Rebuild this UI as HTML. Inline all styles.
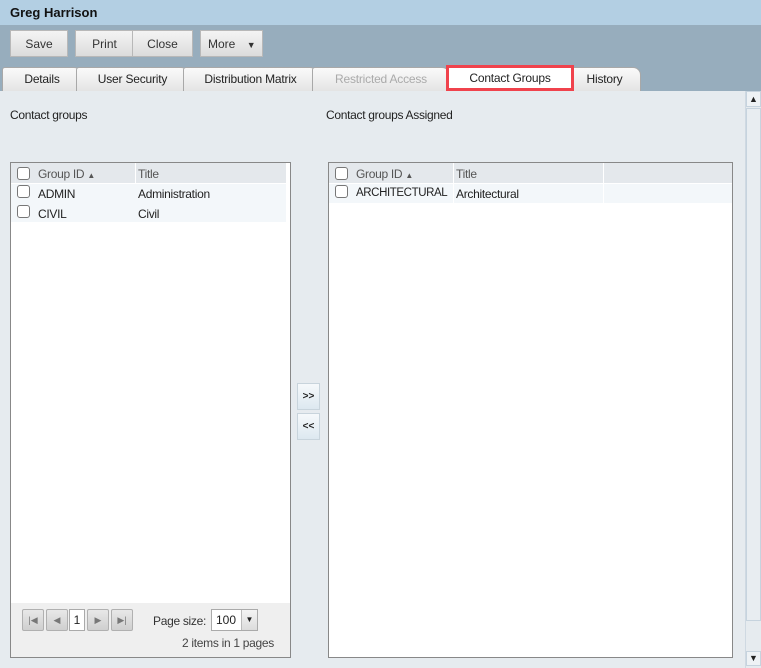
<!DOCTYPE html>
<html><head><meta charset="utf-8"><style>
*{box-sizing:border-box;margin:0;padding:0}
body{width:761px;height:668px;overflow:hidden;background:#e6ebef;font-family:"Liberation Sans",Arial,sans-serif;font-size:12px;color:#222;position:relative}
.a{position:absolute}
.title{left:0;top:0;width:761px;height:25px;background:#b3cfe3;font-weight:bold;font-size:13px;padding:5px 0 0 10px;color:#111}
.tool{left:0;top:25px;width:761px;height:66px;background:#97adbd}
.btn{position:absolute;top:30px;height:27px;background:linear-gradient(#f4f4f4,#dcdcdc);border:1px solid #b8b8b8;text-align:center;line-height:27px;color:#333}
.tab{position:absolute;top:67px;height:24px;background:linear-gradient(#fafafa,#e4e4e4);border:1px solid #a8a8a8;border-bottom:none;border-radius:3px 8px 0 0;text-align:center;line-height:22px;color:#222;letter-spacing:-0.2px}
.grid{position:absolute;top:162px;height:496px;background:#fff;border:1px solid #888}
.hdr{position:absolute;left:0;top:0;height:20px;background:#e4e8ec;width:100%}
.cb{position:absolute;width:13px;height:13px;border:1px solid #777;border-radius:3px;background:#fff}
.row{position:absolute;left:0;height:19px;width:100%;background:#f3f7fa}
.t{position:absolute;white-space:nowrap;letter-spacing:-0.3px}
.pb{position:absolute;top:609px;width:22px;height:22px;background:linear-gradient(#e8e8e8,#cfcfcf);border:1px solid #b0b0b0;border-radius:2px;color:#777;font-size:9px;text-align:center;line-height:20px}
</style></head><body>
<div class="a title">Greg Harrison</div>
<div class="a tool"></div>
<div class="btn" style="left:10px;width:58px">Save</div>
<div class="btn" style="left:75px;width:58px;border-right:none">Print</div>
<div class="btn" style="left:132px;width:61px">Close</div>
<div class="btn" style="left:200px;width:63px;text-align:left;padding-left:7px">More <span style="font-size:9px;margin-left:8px">▼</span></div>

<div class="tab" style="left:2px;width:80px">Details</div>
<div class="tab" style="left:76px;width:113px">User Security</div>
<div class="tab" style="left:183px;width:135px">Distribution Matrix</div>
<div class="tab" style="left:312px;width:138px;color:#aaa">Restricted Access</div>
<div class="tab" style="left:568px;width:73px">History</div>
<div class="tab" style="left:446px;width:128px;background:#fff;border:3px solid #f0424c;border-radius:0;line-height:21px;top:65px;height:26px">Contact Groups</div>

<div class="t" style="left:10px;top:108px">Contact groups</div>
<div class="t" style="left:326px;top:108px">Contact groups Assigned</div>

<div class="grid" style="left:10px;width:281px">
 <div class="hdr" style="width:275px"></div>
 <div class="a" style="left:124px;top:0;width:1px;height:20px;background:#fff"></div>
 <div class="cb" style="left:6px;top:4px"></div><div class="t" style="left:27px;top:4px;color:#555">Group ID <span style="font-size:8px">▲</span></div>
 <div class="t" style="left:127px;top:4px;color:#555">Title</div>
 <div class="row" style="top:21px;width:275px"></div>
 <div class="cb" style="left:6px;top:22px"></div><div class="t" style="left:27px;top:24px">ADMIN</div><div class="t" style="left:127px;top:24px">Administration</div>
 <div class="row" style="top:40px;width:275px"></div>
 <div class="cb" style="left:6px;top:42px"></div><div class="t" style="left:27px;top:44px">CIVIL</div><div class="t" style="left:127px;top:44px">Civil</div>
 <div class="a" style="left:0;top:440px;width:279px;height:54px;background:#efefef"></div>
</div>
<div class="pb" style="left:22px">|◀</div>
<div class="pb" style="left:46px">◀</div>
<div class="a" style="left:69px;top:609px;width:16px;height:22px;background:#fff;border:1px solid #aaa;text-align:center;line-height:20px">1</div>
<div class="pb" style="left:87px">▶</div>
<div class="pb" style="left:111px">▶|</div>
<div class="t" style="left:153px;top:614px;color:#333">Page size:</div>
<div class="a" style="left:211px;top:609px;width:47px;height:22px;background:#fff;border:1px solid #aaa;line-height:20px;padding-left:4px">100<span style="position:absolute;left:29px;top:0;width:16px;height:20px;background:linear-gradient(#f4f4f4,#dcdcdc);border-left:1px solid #bbb;font-size:8px;text-align:center">▼</span></div>
<div class="t" style="left:182px;top:636px;color:#444">2 items in 1 pages</div>

<div class="a" style="left:297px;top:383px;width:23px;height:27px;background:linear-gradient(#f6f9fb,#dde8f0);border:1px solid #c8d4dc;font-weight:bold;font-size:10px;text-align:center;line-height:25px">&gt;&gt;</div>
<div class="a" style="left:297px;top:413px;width:23px;height:27px;background:linear-gradient(#f6f9fb,#dde8f0);border:1px solid #c8d4dc;font-weight:bold;font-size:10px;text-align:center;line-height:25px">&lt;&lt;</div>

<div class="grid" style="left:328px;width:405px">
 <div class="hdr" style="width:403px"></div>
 <div class="a" style="left:124px;top:0;width:1px;height:40px;background:#fff"></div>
 <div class="a" style="left:274px;top:0;width:1px;height:40px;background:#fff"></div>
 <div class="cb" style="left:6px;top:4px"></div><div class="t" style="left:27px;top:4px;color:#555">Group ID <span style="font-size:8px">▲</span></div>
 <div class="t" style="left:127px;top:4px;color:#555">Title</div>
 <div class="row" style="top:21px;width:403px"></div>
 <div class="a" style="left:124px;top:21px;width:1px;height:19px;background:#fff"></div>
 <div class="a" style="left:274px;top:21px;width:1px;height:19px;background:#fff"></div>
 <div class="cb" style="left:6px;top:22px"></div><div class="t" style="left:27px;top:24px;font-size:11.5px;letter-spacing:-0.4px">ARCHITECTURAL</div><div class="t" style="left:127px;top:24px">Architectural</div>
</div>

<div class="a" style="left:745px;top:91px;width:16px;height:577px;background:#e6ebef;border-left:1px solid #cfd9e2"></div>
<div class="a" style="left:746px;top:91px;width:15px;height:16px;background:#eef2f5;border:1px solid #c6d3de;font-size:9px;text-align:center;line-height:14px">▲</div>
<div class="a" style="left:746px;top:108px;width:15px;height:513px;background:#e8edf1;border:1px solid #c6d3de"></div>
<div class="a" style="left:746px;top:651px;width:15px;height:15px;background:#eef2f5;border:1px solid #c6d3de;font-size:9px;text-align:center;line-height:13px">▼</div>
</body></html>
